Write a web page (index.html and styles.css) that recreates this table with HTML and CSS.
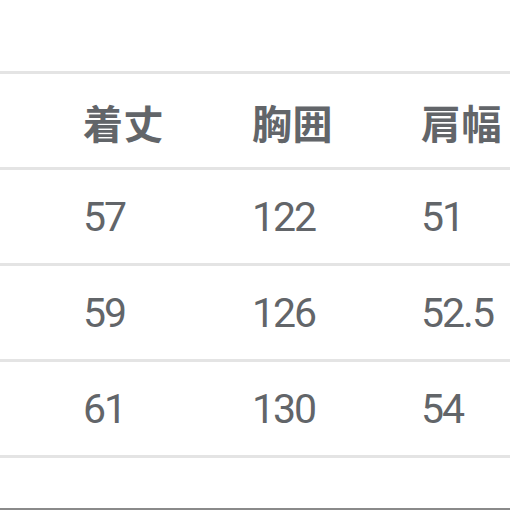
FILE: index.html
```html
<!DOCTYPE html>
<html lang="ja">
<head>
<meta charset="utf-8">
<link rel="stylesheet" href="styles.css">
</head>
<body>
<div class="page">
  <div class="table">
    <div class="row head">
      <div class="cell"></div>
      <div class="cell">着丈</div>
      <div class="cell">胸囲</div>
      <div class="cell">肩幅</div>
    </div>
    <div class="row">
      <div class="cell"></div>
      <div class="cell">57</div>
      <div class="cell">122</div>
      <div class="cell">51</div>
    </div>
    <div class="row">
      <div class="cell"></div>
      <div class="cell">59</div>
      <div class="cell">126</div>
      <div class="cell">52.5</div>
    </div>
    <div class="row last">
      <div class="cell"></div>
      <div class="cell">61</div>
      <div class="cell">130</div>
      <div class="cell">54</div>
    </div>
  </div>
  <div class="bottom"></div>
</div>
</body>
</html>
```
FILE: styles.css
```css
html, body {
  margin: 0;
  padding: 0;
  background: #ffffff;
}
.page {
  width: 510px;
  height: 510px;
  display: flex;
  flex-direction: column;
  overflow: hidden;
}
.table {
  padding-top: 71px;
}
.row {
  display: grid;
  grid-template-columns: 83px 169px 169px 1fr;
  align-items: center;
  height: 93px;
  border-top: 3px solid #e4e4e4;
  color: #626569;
  font-family: Roboto, "Noto Sans CJK JP", sans-serif;
  font-size: 41px;
  letter-spacing: -2px;
  white-space: nowrap;
}
.row.last {
  border-bottom: 3px solid #e4e4e4;
}
.head {
  font-family: "Noto Sans CJK JP", sans-serif;
  font-weight: 700;
  font-size: 40px;
  letter-spacing: 0.5px;
}
.cell {
  line-height: 1;
  padding-top: 2px;
}
.bottom {
  margin-top: auto;
  height: 2px;
  background: #8a8a8a;
}
```
